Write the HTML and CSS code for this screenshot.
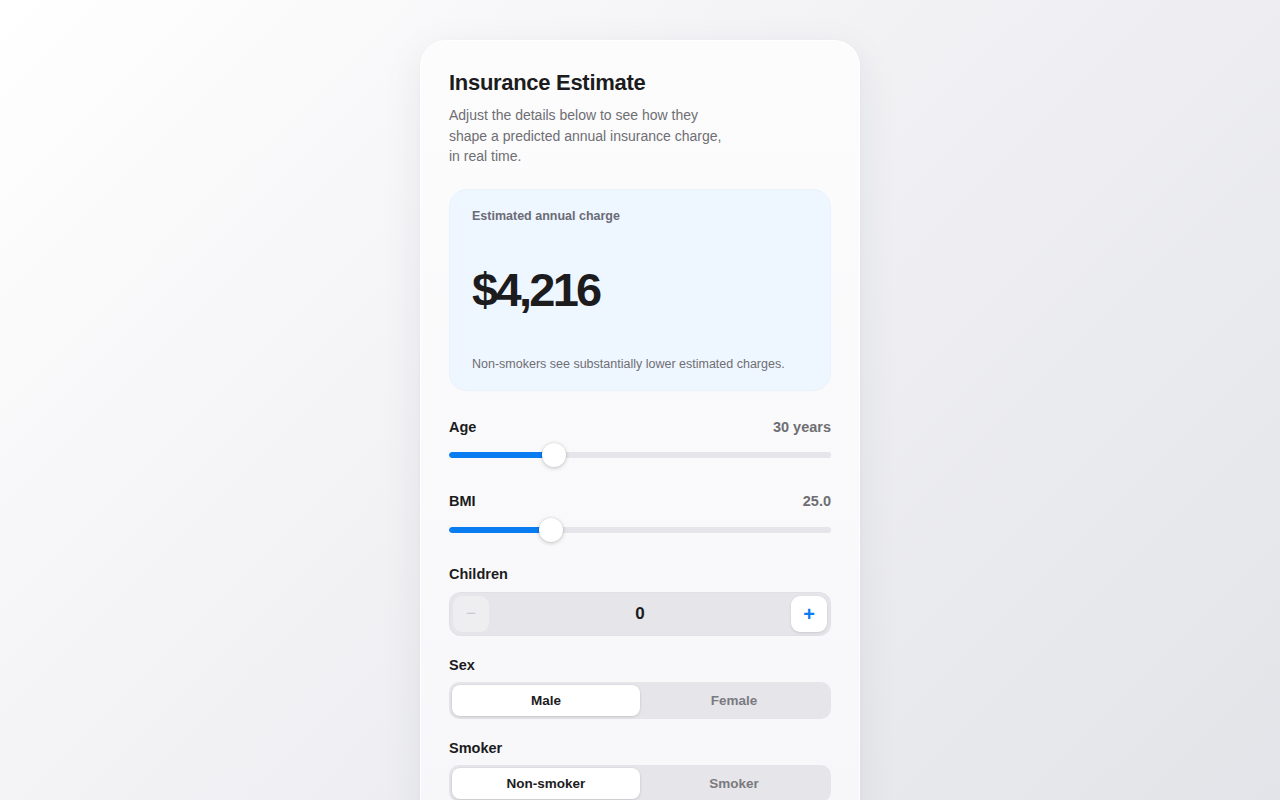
FILE: index.html
```html
<!DOCTYPE html>
<html lang="en">
<head>
<meta charset="utf-8">
<title>Insurance Estimate</title>
<link rel="stylesheet" href="styles.css">
</head>
<body>
<main class="card">
  <header class="head">
    <h1 class="title">Insurance Estimate</h1>
    <p class="subtitle">Adjust the details below to see how they shape a predicted annual insurance charge, in real time.</p>
  </header>

  <section class="result">
    <div class="result-label">Estimated annual charge</div>
    <div class="result-amount">$4,216</div>
    <div class="result-note">Non-smokers see substantially lower estimated charges.</div>
  </section>

  <section class="fields">
    <div class="field field-slider field-age">
      <div class="field-row">
        <span class="field-label">Age</span>
        <span class="field-value">30 years</span>
      </div>
      <div class="slider">
        <div class="track">
          <div class="fill" style="width: 105px"></div>
        </div>
        <div class="thumb" style="left: 93px"></div>
      </div>
    </div>

    <div class="field field-slider field-bmi">
      <div class="field-row">
        <span class="field-label">BMI</span>
        <span class="field-value">25.0</span>
      </div>
      <div class="slider">
        <div class="track">
          <div class="fill" style="width: 102px"></div>
        </div>
        <div class="thumb" style="left: 90px"></div>
      </div>
    </div>

    <div class="field">
      <div class="field-row">
        <span class="field-label">Children</span>
      </div>
      <div class="stepper">
        <button class="step step-minus" disabled>−</button>
        <span class="step-value">0</span>
        <button class="step step-plus">+</button>
      </div>
    </div>

    <div class="field">
      <div class="field-row field-row-seg">
        <span class="field-label">Sex</span>
      </div>
      <div class="segmented">
        <button class="seg seg-active">Male</button>
        <button class="seg">Female</button>
      </div>
    </div>

    <div class="field">
      <div class="field-row field-row-seg">
        <span class="field-label">Smoker</span>
      </div>
      <div class="segmented">
        <button class="seg seg-active">Non-smoker</button>
        <button class="seg">Smoker</button>
      </div>
    </div>
  </section>
</main>
</body>
</html>
```

FILE: styles.css
```css
* { box-sizing: border-box; }

html, body {
  margin: 0;
  padding: 0;
}

body {
  min-height: 100vh;
  font-family: "Liberation Sans", Arial, sans-serif;
  color: #1c1c1e;
  background: linear-gradient(135deg, #ffffff 0%, #f1f1f4 45%, #e2e3e8 100%);
  display: flex;
  justify-content: center;
  padding-top: 40px;
  overflow: hidden;
}

.card {
  width: 440px;
  min-height: 820px;
  background: linear-gradient(180deg, #fcfcfd 0%, #f7f7f9 100%);
  border-radius: 26px;
  box-shadow: 0 12px 40px rgba(30, 35, 60, 0.08), 0 1px 3px rgba(0, 0, 0, 0.04);
  border: 1px solid rgba(255, 255, 255, 0.9);
  padding: 28px 28px 40px;
}

.title {
  margin: 0;
  font-size: 22px;
  line-height: 28px;
  font-weight: 700;
  letter-spacing: -0.3px;
  color: #1c1c1e;
}

.subtitle {
  margin: 8px 0 0;
  max-width: 282px;
  font-size: 14px;
  line-height: 20.5px;
  color: #6e6e73;
}

.result {
  margin-top: 22px;
  height: 202px;
  border-radius: 18px;
  background: #eef6ff;
  border: 1px solid #e9f2fd;
  padding: 17px 22px 17px;
  display: flex;
  flex-direction: column;
  justify-content: space-between;
}

.result-label {
  font-size: 12.5px;
  line-height: 18px;
  font-weight: 700;
  color: #6b6b76;
}

.result-amount {
  font-size: 47px;
  line-height: 52px;
  font-weight: 700;
  letter-spacing: -2.7px;
  color: #1c1c1e;
}

.result-note {
  font-size: 12.5px;
  line-height: 18px;
  color: #6e6e73;
}

.fields {
  margin-top: 26px;
  display: flex;
  flex-direction: column;
  gap: 18px;
}

.field-row {
  display: flex;
  justify-content: space-between;
  align-items: center;
  height: 20px;
}

.field-row-seg {
  padding-top: 2px;
}

.field-label {
  font-size: 14.5px;
  font-weight: 700;
  color: #1c1c1e;
}

.field-value {
  font-size: 14.5px;
  font-weight: 700;
  color: #6e6e73;
}

.slider {
  position: relative;
  height: 24px;
  margin-top: 6px;
  margin-bottom: 6px;
  display: flex;
  align-items: center;
}

.field-bmi .slider {
  margin-top: 7px;
  margin-bottom: 4px;
}

.track {
  width: 100%;
  height: 6px;
  border-radius: 3px;
  background: #e5e5ea;
  overflow: hidden;
}

.fill {
  height: 100%;
  background: #0a7cf2;
  border-radius: 3px;
}

.thumb {
  position: absolute;
  top: 0;
  width: 24px;
  height: 24px;
  border-radius: 50%;
  background: #ffffff;
  box-shadow: 0 1px 4px rgba(0, 0, 0, 0.22), 0 0 0 0.5px rgba(0, 0, 0, 0.06);
}

.stepper {
  margin-top: 8px;
  height: 44px;
  border-radius: 12px;
  background: #e5e5ea;
  box-shadow: inset 0 0 0 1px rgba(0, 0, 0, 0.02);
  padding: 4px;
  display: flex;
  align-items: center;
  justify-content: space-between;
}

.step {
  width: 36px;
  height: 36px;
  border: none;
  border-radius: 9px;
  font-family: "Liberation Sans", Arial, sans-serif;
  font-size: 20px;
  font-weight: 700;
  line-height: 1;
  padding: 0;
  display: flex;
  align-items: center;
  justify-content: center;
}

.step-minus {
  background: #eeeef1;
  color: #c9c9ce;
  font-size: 17px;
  font-weight: 400;
}

.step-plus {
  background: #ffffff;
  color: #0a7cf2;
  box-shadow: 0 1px 3px rgba(0, 0, 0, 0.12);
}

.step-value {
  font-size: 17px;
  font-weight: 700;
  color: #1c1c1e;
}

.segmented {
  margin-top: 8px;
  height: 37px;
  border-radius: 10px;
  background: #e5e5ea;
  padding: 3px;
  display: grid;
  grid-template-columns: 1fr 1fr;
}

.seg {
  border: none;
  background: transparent;
  border-radius: 8px;
  font-family: "Liberation Sans", Arial, sans-serif;
  font-size: 13.5px;
  font-weight: 700;
  color: #7a7a80;
  padding: 0;
}

.seg-active {
  background: #ffffff;
  color: #1c1c1e;
  box-shadow: 0 1px 3px rgba(0, 0, 0, 0.12), 0 0 0 0.5px rgba(0, 0, 0, 0.04);
}
```
